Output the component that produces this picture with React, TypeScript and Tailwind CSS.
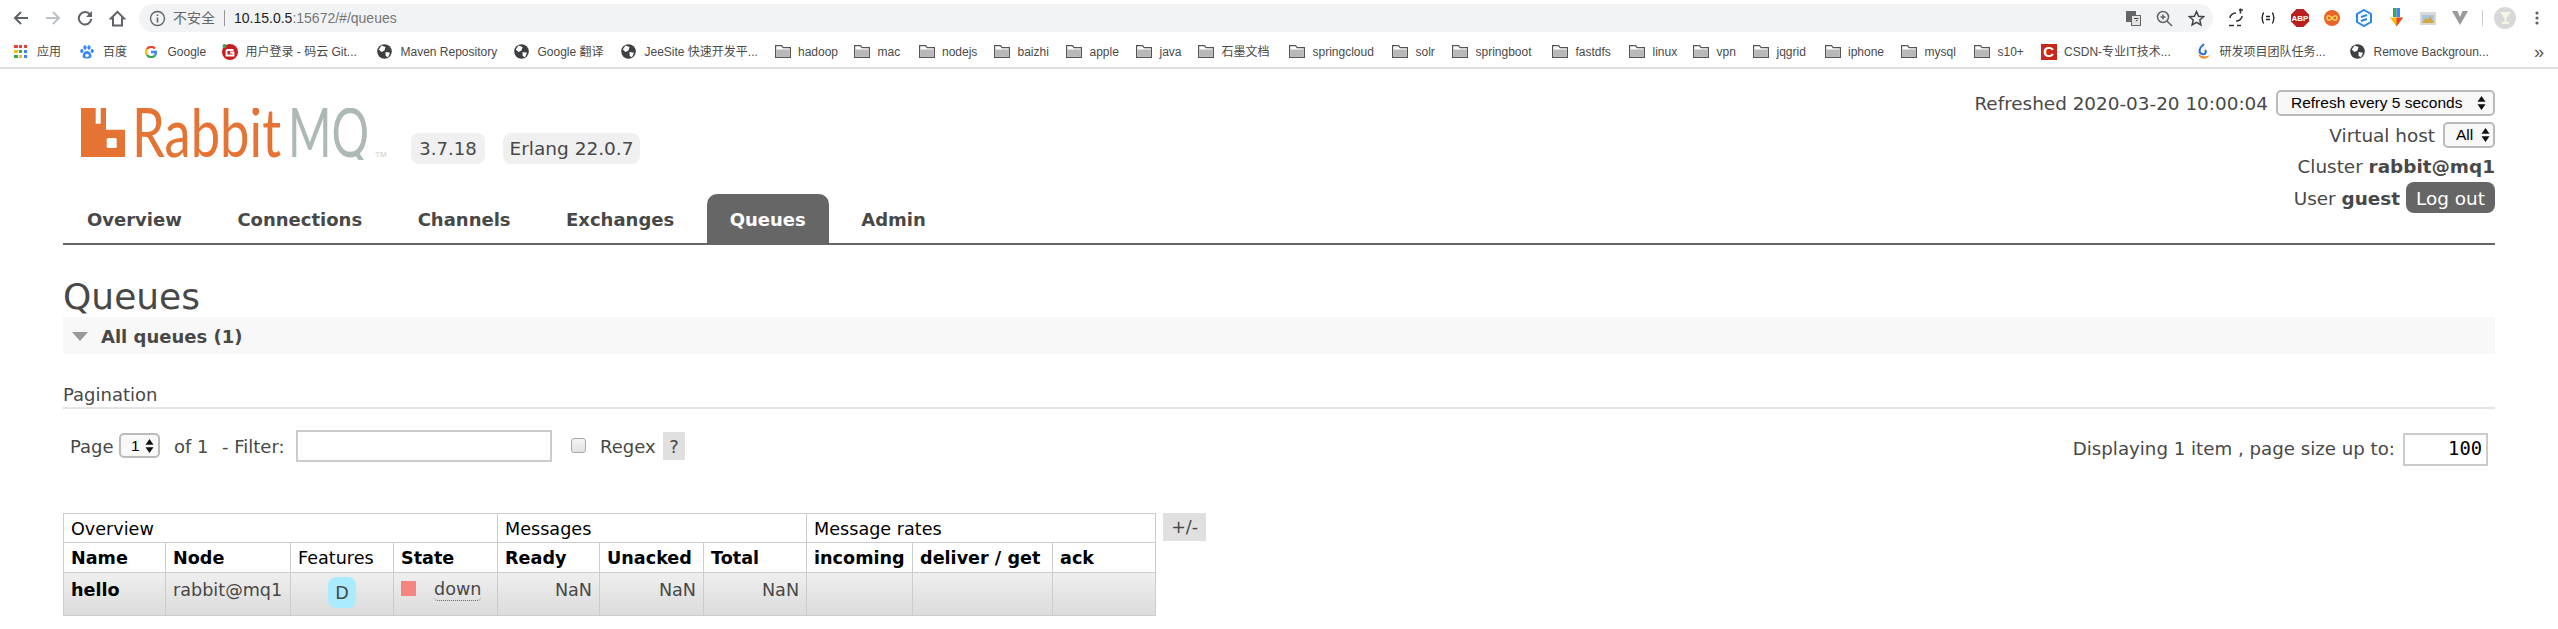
import React from "react";

const Folder = () => (
  <svg width="16" height="13" viewBox="0 0 16 13" className="shrink-0">
    <path d="M.6.6h6l1.500 2h7.300v9.800H.6z" fill="#fff" stroke="#555" strokeWidth="1.200" />
    <rect x="1.200" y="4.500" width="13.600" height="7.300" fill="#b8b8b8" />
  </svg>
);
const Globe = () => (
  <svg width="15" height="15" viewBox="0 0 15 15" className="shrink-0">
    <circle cx="7.500" cy="7.500" r="7.300" fill="#3c4043" />
    <path d="M4.500 1.500l4 1.500-1 3.500-3 1.500L1.800 5.500zM8.500 8l4.500.8-2 4.400-2.300-1.200z" fill="#fff" />
  </svg>
);

type B = { l: string; w: number; i: React.ReactNode };
const bookmarks: B[] = [
  { l: "百度", w: 64.5, i: <svg width="14" height="14" viewBox="0 0 14 14" className="shrink-0"><ellipse cx="1.800" cy="6" rx="1.600" ry="2" fill="#3385ff"/><ellipse cx="5" cy="2.500" rx="1.600" ry="2.300" fill="#3385ff"/><ellipse cx="9" cy="2.500" rx="1.600" ry="2.300" fill="#3385ff"/><ellipse cx="12.200" cy="6" rx="1.600" ry="2" fill="#3385ff"/><path d="M7 6c3 0 5 3.500 4.200 6.200-1 1.800-7.400 1.800-8.400 0C2 9.500 4 6 7 6z" fill="#3385ff"/><circle cx="7" cy="10.500" r="1.800" fill="#fff"/></svg> },
  { l: "Google", w: 78, i: <svg width="12" height="12" viewBox="0 0 14 14" fill="none" strokeWidth="2.800" className="ml-[1px] shrink-0"><path d="M11.500 3A5.800 5.800 0 0 0 2.300 3.700" stroke="#ea4335"/><path d="M2.300 3.700a5.800 5.800 0 0 0 0 6.600" stroke="#fbbc05"/><path d="M2.300 10.300a5.800 5.800 0 0 0 9.200.7" stroke="#34a853"/><path d="M11.500 11c1-1 1.300-2.200 1.300-4H7" stroke="#4285f4"/></svg> },
  { l: "用户登录 - 码云 Git...", w: 155, i: <svg width="16" height="16" viewBox="0 0 16 16" className="shrink-0"><circle cx="8" cy="8" r="8" fill="#c71d23"/><circle cx="2.500" cy="2" r="2" fill="#3aa757"/><path d="M4.500 6h7M4.500 6v5.500h7V8.500H8" stroke="#fff" strokeWidth="1.800" fill="none"/></svg> },
  { l: "Maven Repository", w: 137, i: <Globe /> },
  { l: "Google 翻译", w: 107, i: <Globe /> },
  { l: "JeeSite 快速开发平...", w: 153.5, i: <Globe /> },
  { l: "hadoop", w: 79.5, i: <Folder /> },
  { l: "mac", w: 64.5, i: <Folder /> },
  { l: "nodejs", w: 75.5, i: <Folder /> },
  { l: "baizhi", w: 72, i: <Folder /> },
  { l: "apple", w: 70, i: <Folder /> },
  { l: "java", w: 62, i: <Folder /> },
  { l: "石墨文档", w: 91, i: <Folder /> },
  { l: "springcloud", w: 103, i: <Folder /> },
  { l: "solr", w: 60, i: <Folder /> },
  { l: "springboot", w: 100, i: <Folder /> },
  { l: "fastdfs", w: 77, i: <Folder /> },
  { l: "linux", w: 64, i: <Folder /> },
  { l: "vpn", w: 60, i: <Folder /> },
  { l: "jqgrid", w: 71.5, i: <Folder /> },
  { l: "iphone", w: 76.5, i: <Folder /> },
  { l: "mysql", w: 73, i: <Folder /> },
  { l: "s10+", w: 66.6, i: <Folder /> },
  { l: "CSDN-专业IT技术...", w: 155.4, i: <span className="w-4 h-4 bg-[#c9281c] text-white font-bold text-[15px] leading-4 text-center shrink-0">C</span> },
  { l: "研发项目团队任务...", w: 154, i: <svg width="15" height="18" viewBox="0 0 15 18" className="shrink-0"><path d="M8 1c-5 4-6 9-2 10 3 1 5-2 3-4" stroke="#2a6fdb" strokeWidth="2" fill="none"/><path d="M2 11c2 6 9 6 12 1-3 2-8 2-12-1z" fill="#f08a24"/></svg> },
  { l: "Remove Backgroun...", w: 184, i: <Globe /> },
];

const Th = ({ children, bold = true }: { children: React.ReactNode; bold?: boolean }) => (
  <th className={`h-[29px] border border-[#ccc] px-[7px] pt-[2px] text-left align-middle text-[17.6px] text-black whitespace-nowrap ${bold ? "font-bold" : "font-normal"}`}>{children}</th>
);
const GroupTh = ({ children, span }: { children: React.ReactNode; span: number }) => (
  <th colSpan={span} className="h-[29px] border border-[#ccc] px-[7px] pt-[2px] text-left text-[17.6px] font-normal text-black whitespace-nowrap">{children}</th>
);
const Td = ({ children, cls = "" }: { children?: React.ReactNode; cls?: string }) => (
  <td className={`border border-[#ccc] px-[7px] pt-[5px] align-top text-[17.6px] leading-[24px] text-[#484848] whitespace-nowrap ${cls}`}>{children}</td>
);
const Nan = () => <Td cls="text-right">NaN</Td>;

const Arrows = () => (
  <svg width="9" height="16" viewBox="0 0 9 16" className="shrink-0">
    <path d="M4.500 1L8.500 6.800H.5zM4.500 15L8.500 9.200H.5z" fill="#111" />
  </svg>
);
const Sel = ({ children, cls }: { children: React.ReactNode; cls: string }) => (
  <span className={`flex items-center justify-between rounded-[5px] border-2 border-[#bbb] bg-[#f8f8f8] text-[15.5px] text-black font-['Liberation_Sans',sans-serif] ${cls}`}>
    {children}
    <Arrows />
  </span>
);
const Cell = ({ children }: { children: React.ReactNode }) => (
  <span className="w-[32px] h-[36px] flex items-center justify-center shrink-0">{children}</span>
);

const colWidths = ["w-[102px]", "w-[125px]", "w-[103px]", "w-[104px]", "w-[102px]", "w-[104px]", "w-[103px]", "w-[106px]", "w-[140px]", "w-[103px]"];

export default function App() {
  return (
    <div className="w-[2558px] h-[629px] overflow-hidden bg-white font-['DejaVu_Sans',sans-serif] text-[#484848]">
      <header className="h-[69px] border-b-2 border-[#e0e0e0] font-['Liberation_Sans','Noto_Sans_CJK_SC',sans-serif] text-[#4a4a4a]">
        <div className="h-[36px] flex items-start">
          <div className="flex items-center w-[139px] h-[36px] pl-[5px] shrink-0">
            <Cell><svg width="16" height="16" viewBox="0 0 16 16" fill="none" stroke="#5f6368" strokeWidth="2"><path d="M15 8H2M8 2L2 8l6 6" /></svg></Cell>
            <Cell><svg width="16" height="16" viewBox="0 0 16 16" fill="none" stroke="#bdc1c6" strokeWidth="2"><path d="M1 8h13M8 2l6 6-6 6" /></svg></Cell>
            <Cell><svg width="16" height="16" viewBox="0 0 16 16" fill="none" stroke="#5f6368" strokeWidth="2"><path d="M13 4.600A6.200 6.200 0 1 0 14.200 8.800" /><path d="M15 1v6H9z" fill="#5f6368" stroke="none" /></svg></Cell>
            <Cell><svg width="17" height="17" viewBox="0 0 17 17" fill="none" stroke="#5f6368" strokeWidth="2"><path d="M8.500 1.800L1.800 8.500h2.200v7h9v-7h2.200z" /></svg></Cell>
          </div>
          <div className="mt-[4px] h-[28px] w-[2074px] shrink-0 bg-[#f1f3f4] rounded-full flex items-center pl-[10px] text-[14px]">
            <svg width="17" height="17" viewBox="0 0 17 17" fill="none" stroke="#5f6368" strokeWidth="1.400"><circle cx="8.500" cy="8.500" r="7" /><path d="M8.500 7.500v5M8.500 4.500v1.500" strokeWidth="1.600" /></svg>
            <span className="ml-[7px] text-[#666] w-[42px] whitespace-nowrap">不安全</span>
            <span className="ml-[9px] h-[16px] w-px bg-[#999]" />
            <span className="ml-[9px] text-[#222]">10.15.0.5</span><span className="text-[#777]">:15672/#/queues</span>
            <span className="ml-auto flex items-center gap-[15px] pr-[8px]">
              <svg width="15" height="15" viewBox="0 0 15 15"><rect x="0" y="0" width="10" height="11" fill="#666" /><rect x="5.500" y="4.500" width="9" height="10" fill="#e4e4e4" stroke="#666" /><path d="M8 7.500h4.500M10 9.500h1.500" stroke="#444" /></svg>
              <svg width="17" height="17" viewBox="0 0 17 17" fill="none" stroke="#5f6368" strokeWidth="1.500"><circle cx="7" cy="7" r="5.500" /><path d="M11 11l5 5M7 4.500v5M4.500 7h5" /></svg>
              <svg width="17" height="17" viewBox="0 0 17 17" fill="none" stroke="#444" strokeWidth="1.500"><path d="M8.500 1.500l2.100 4.700 5 .5-3.800 3.300 1.100 5-4.400-2.600-4.400 2.600 1.100-5L1.400 6.700l5-.5z" /></svg>
            </span>
          </div>
          <div className="flex-1 flex items-center h-[36px] pl-[7px]">
            <Cell><svg width="16" height="20" viewBox="0 0 16 20" fill="none" stroke="#333" strokeWidth="1.600"><path d="M2 10c0-3 3-5 6-5M14 8c0 3-3 5-6 5" /><path d="M11 2h4M12.500 .5v5M1 17.500h5M9 17.500h4" /></svg></Cell>
            <Cell><svg width="14" height="12" viewBox="0 0 14 12" fill="none" stroke="#222" strokeWidth="1.300"><path d="M3 1C1 1 2 5 1 6c1 1 0 5 2 5M11 1c2 0 1 4 2 5-1 1 0 5-2 5M5 4.500h4M5 7.500h4" /></svg></Cell>
            <Cell><svg width="18" height="18" viewBox="0 0 18 18"><path d="M5.500 0h7L18 5.500v7L12.500 18h-7L0 12.500v-7z" fill="#b8201f" /><text x="9" y="12" textAnchor="middle" fontSize="8" fontWeight="700" fill="#fff" fontFamily="Liberation Sans, sans-serif">ABP</text></svg></Cell>
            <Cell><svg width="18" height="18" viewBox="0 0 18 18"><circle cx="9" cy="9" r="8" fill="#e8622c" /><path d="M9 9c-2-3-5-3-5 0s3 3 5 0c2-3 5-3 5 0s-3 3-5 0z" fill="none" stroke="#f6d24a" strokeWidth="1.400" /></svg></Cell>
            <Cell><svg width="16" height="18" viewBox="0 0 16 18" fill="none" stroke="#2a86e8" strokeWidth="2"><path d="M8 1l7 4v8l-7 4-7-4V5z" /><path d="M5 8l6-2M5 12l6-2" /></svg></Cell>
            <Cell><svg width="13" height="20" viewBox="0 0 13 20"><path d="M3 0h3.500v9H3z" fill="#3aa757" /><path d="M6.500 0H10v9H6.500z" fill="#4285f4" /><path d="M0 9.500h13l-6.500 9z" fill="#fbbc05" /><path d="M6.500 9.500H13l-6.500 9z" fill="#ea4335" /></svg></Cell>
            <Cell><svg width="16" height="13" viewBox="0 0 16 13"><rect width="16" height="13" fill="#d8d8d8" /><path d="M2 3h12v7H2z" fill="#a9c4dd" /><path d="M2 11l4-5 2 2 2-4 4 7z" fill="#d6a73a" /></svg></Cell>
            <Cell><svg width="16" height="14" viewBox="0 0 16 14"><path d="M0 0h5.500L8 6l2.500-6H16L8 14z" fill="#9a9a9a" /></svg></Cell>
            <span className="w-px h-[16px] bg-[#ccc] ml-[6px] shrink-0" />
            <span className="ml-[11px] w-[22px] h-[22px] rounded-full bg-[#d8d8d8] flex items-center justify-center shrink-0">
              <svg width="11" height="14" viewBox="0 0 11 14"><path d="M0 1h11L6.500 7v4H9v2H2v-2h2.500V7z" fill="#f2f6e2" /></svg>
            </span>
            <svg width="4" height="14" viewBox="0 0 4 14" fill="#5f6368" className="ml-[19px] shrink-0"><circle cx="2" cy="2" r="1.600" /><circle cx="2" cy="7" r="1.600" /><circle cx="2" cy="12" r="1.600" /></svg>
          </div>
        </div>
        <div className="h-[31px] flex items-center pl-[14px] text-[12px] whitespace-nowrap">
          <div className="w-[13px] grid grid-cols-3 gap-[1.5px] mr-[10px] shrink-0">
            <span className="w-[3.500px] h-[3.500px] bg-[#ea4335]" />
            <span className="w-[3.500px] h-[3.500px] bg-[#ea4335]" />
            <span className="w-[3.500px] h-[3.500px] bg-[#ea4335]" />
            <span className="w-[3.500px] h-[3.500px] bg-[#fbbc05]" />
            <span className="w-[3.500px] h-[3.500px] bg-[#34a853]" />
            <span className="w-[3.500px] h-[3.500px] bg-[#4285f4]" />
            <span className="w-[3.500px] h-[3.500px] bg-[#34a853]" />
            <span className="w-[3.500px] h-[3.500px] bg-[#fbbc05]" />
            <span className="w-[3.500px] h-[3.500px] bg-[#4285f4]" />
          </div>
          <span className="w-[42.500px] shrink-0">应用</span>
          {bookmarks.map((b) => (
            <div key={b.l} className="flex items-center shrink-0" style={{ width: b.w }}>
              <span className="w-[23.500px] flex items-center shrink-0">{b.i}</span>
              <span>{b.l}</span>
            </div>
          ))}
          <span className="text-[18px] leading-none text-[#555]">»</span>
        </div>
      </header>

      <main className="mx-[63px]">
        <div className="h-[176px] border-b-2 border-[#666] flex justify-between">
          <div className="flex flex-col">
            <div className="flex items-start pt-[39px] pl-[18px]">
              <svg width="306" height="52" viewBox="0 0 306 52" className="shrink-0">
                <path d="M0 0h14.700v15.700h5V0H25v21.700h19V49H0z" fill="#e57333" />
                <rect x="25.700" y="30" width="10" height="10" rx="1.500" fill="#fff" />
                <text transform="translate(51 49) scale(.773 1)" fontFamily="Lato, Liberation Sans, sans-serif" fontSize="68" fill="#e57333">Rabbit</text>
                <text transform="translate(207 49) scale(.69 1)" fontFamily="Lato, Liberation Sans, sans-serif" fontSize="68" fill="#adb9b4">MQ</text>
                <text x="294" y="49" fontFamily="Liberation Sans, sans-serif" fontSize="8" fill="#ccc">TM</text>
              </svg>
              <span className="ml-[24px] mt-[25px] h-[31px] w-[74px] rounded-[8px] bg-[#f0f0f0] flex items-center justify-center text-[18px]">3.7.18</span>
              <span className="ml-[18px] mt-[25px] h-[31px] w-[137px] rounded-[8px] bg-[#f0f0f0] flex items-center justify-center text-[18.500px] whitespace-nowrap">Erlang 22.0.7</span>
            </div>
            <nav className="mt-auto flex text-[18px] font-bold pl-px">
              {["Overview", "Connections", "Channels", "Exchanges", "Queues", "Admin"].map((t) => (
                <span key={t} className={`h-[49px] px-[23px] pt-[2px] mr-[9.500px] flex items-center rounded-t-[10px] ${t === "Queues" ? "bg-[#666] text-white" : ""}`}>{t}</span>
              ))}
            </nav>
          </div>
          <div className="flex flex-col items-end pt-[21px] text-[18.400px] whitespace-nowrap">
            <div className="h-[26px] flex items-center gap-[8px]">
              <span className="pt-[2px]">Refreshed 2020-03-20 10:00:04</span>
              <Sel cls="w-[219px] h-[26px] pl-[13px] pr-[7px]">Refresh every 5 seconds</Sel>
            </div>
            <div className="mt-[6px] h-[26px] flex items-center gap-[8px]">
              <span className="pt-[2px]">Virtual host</span>
              <Sel cls="w-[52px] h-[26px] pl-[11px] pr-[3px]">All</Sel>
            </div>
            <div className="mt-[5px] h-[26px] pt-[2px] flex items-center">Cluster&nbsp;<b>rabbit@mq1</b></div>
            <div className="mt-[3px] flex items-center gap-[6px]">
              <span className="pt-[2px]">User <b>guest</b></span>
              <span className="w-[89px] h-[31px] pt-[2px] rounded-[8px] bg-[#666] text-white flex items-center justify-center">Log out</span>
            </div>
          </div>
        </div>

        <h1 className="mt-[32px] text-[36px] font-normal leading-[40px]">Queues</h1>
        <div className="h-[37px] pt-[2px] bg-[#f8f8f8] flex items-center pl-[9px] text-[18px] font-bold">
          <span className="w-0 h-0 border-x-[8px] border-x-transparent border-t-[9px] border-t-[#999] mr-[13px]" />
          All queues (1)
        </div>
        <div className="mt-[29px] h-[26px] border-b-2 border-[#e4e4e4] text-[18px] leading-[23px]">Pagination</div>

        <div className="mt-[20px] h-[33px] flex items-center text-[18px] whitespace-nowrap">
          <span className="ml-[7px] w-[44px] pt-[2px]">Page</span>
          <Sel cls="ml-[5px] w-[41px] h-[25px] pl-[10px] pr-[4px]">1</Sel>
          <span className="ml-[14px] w-[33px] pt-[2px]">of 1</span>
          <span className="ml-[15px] w-[66px] pt-[2px]">- Filter:</span>
          <span className="ml-[8px] w-[256px] h-[32px] border-2 border-[#ccc] bg-white" />
          <span className="ml-[19px] w-[15px] h-[15px] rounded-[3px] border border-[#aaa] bg-gradient-to-b from-[#f4f4f4] to-[#e2e2e2]" />
          <span className="ml-[14px] w-[56px] pt-[2px]">Regex</span>
          <span className="ml-[7px] w-[22px] h-[28px] pt-[2px] bg-[#e0e0e0] flex items-center justify-center">?</span>
          <span className="ml-auto mr-[7px] mt-[7px] flex items-center gap-[8px] text-[18.200px]">
            Displaying 1 item , page size up to:
            <span className="w-[85px] h-[33px] border-2 border-[#ccc] flex items-center justify-end pr-[4px] text-[18.800px] text-black font-['DejaVu_Sans_Mono',monospace]">100</span>
          </span>
        </div>

        <div className="mt-[51px] flex items-start">
          <table className="border-collapse table-fixed w-[1092px] h-[101px] shrink-0">
            <colgroup>
              {colWidths.map((w, i) => <col key={i} className={w} />)}
            </colgroup>
            <thead>
              <tr>
                <GroupTh span={4}>Overview</GroupTh>
                <GroupTh span={3}>Messages</GroupTh>
                <GroupTh span={3}>Message rates</GroupTh>
              </tr>
              <tr>
                <Th>Name</Th>
                <Th>Node</Th>
                <Th bold={false}>Features</Th>
                <Th>State</Th>
                <Th>Ready</Th>
                <Th>Unacked</Th>
                <Th>Total</Th>
                <Th>incoming</Th>
                <Th>deliver / get</Th>
                <Th>ack</Th>
              </tr>
            </thead>
            <tbody>
              <tr className="h-[43px] bg-gradient-to-b from-[#efefef] to-[#dcdcdc]">
                <Td cls="font-bold text-black">hello</Td>
                <Td>rabbit@mq1</Td>
                <Td><span className="-mt-px mx-auto flex w-[28px] h-[31px] pt-[2px] rounded-[8px] bg-[#aaebff] items-center justify-center">D</span></Td>
                <Td>
                  <span className="flex items-start">
                    <span className="w-[15px] h-[15px] bg-[#f4857f] mr-[18px] mt-[3px] shrink-0" />
                    <span className="mt-px border-b border-dotted border-[#666] rounded-b-[4px] leading-[21px]">down</span>
                  </span>
                </Td>
                <Nan /><Nan /><Nan />
                <Td /><Td /><Td />
              </tr>
            </tbody>
          </table>
          <span className="ml-[7px] w-[43px] h-[28px] bg-[#e0e0e0] flex items-center justify-center text-[17.500px]">+/-</span>
        </div>
      </main>
    </div>
  );
}
